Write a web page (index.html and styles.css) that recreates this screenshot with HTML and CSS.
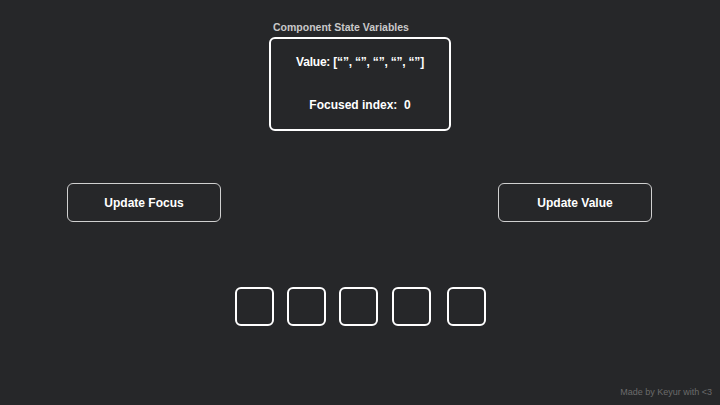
FILE: index.html
```html
<!DOCTYPE html>
<html lang="en">
<head>
  <meta charset="UTF-8">
  <title>OTP Input</title>
  <link rel="stylesheet" href="styles.css">
</head>
<body>

  <div class="state">
    <div class="state-label">Component State Variables</div>
    <div class="state-box">
      <p id="valueText">Value: [“”, “”, “”, “”, “”]</p>
      <p id="focusText">Focused index:&nbsp; 0</p>
    </div>
  </div>

  <div class="actions">
    <button class="action-btn">Update Focus</button>
    <button class="action-btn">Update Value</button>
  </div>

  <div class="otp">
    <input class="otp-box" type="text" maxlength="1">
    <input class="otp-box" type="text" maxlength="1">
    <input class="otp-box" type="text" maxlength="1">
    <input class="otp-box" type="text" maxlength="1">
    <input class="otp-box" type="text" maxlength="1">
  </div>

  <footer>Made by Keyur with &lt;3</footer>

</body>
</html>
```

FILE: styles.css
```css
html, body {
  height: 100%;
}

body {
  margin: 0;
  background: #262729;
  color: #ffffff;
  font-family: 'Liberation Sans', Arial, sans-serif;
  display: flex;
  flex-direction: column;
  align-items: center;
  overflow: hidden;
}

.state {
  margin-top: 21px;
}

.state-label {
  padding-left: 4px;
  font-size: 10.5px;
  line-height: 12px;
  font-weight: bold;
  color: #c9c9c9;
}

.state-box {
  box-sizing: border-box;
  width: 182px;
  height: 94px;
  margin-top: 4px;
  border: 2px solid #ffffff;
  border-radius: 6px;
  text-align: center;
  padding-top: 16px;
}

.state-box p {
  margin: 0;
  font-size: 12px;
  line-height: 14px;
  font-weight: bold;
}

#valueText {
  letter-spacing: -0.2px;
}

#focusText {
  margin-top: 29px;
}

.actions {
  align-self: stretch;
  display: flex;
  justify-content: space-between;
  padding: 0 68px 0 67px;
  margin-top: 52px;
}

.action-btn {
  box-sizing: border-box;
  width: 154px;
  height: 39px;
  background: transparent;
  border: 1px solid #d0d0d0;
  border-radius: 6px;
  color: #ffffff;
  font-family: inherit;
  font-size: 12px;
  font-weight: bold;
  cursor: pointer;
}

.otp {
  display: flex;
  gap: 13px;
  margin-top: 65px;
}

.otp-box {
  box-sizing: border-box;
  width: 39px;
  height: 39px;
  background: transparent;
  border: 2px solid #ffffff;
  border-radius: 6px;
  color: #ffffff;
  text-align: center;
  font-size: 16px;
  outline: none;
}

.otp-box:nth-child(4) {
  margin-left: 1px;
}

.otp-box:last-child {
  margin-left: 3px;
}

footer {
  margin-top: auto;
  align-self: flex-end;
  padding: 0 8px 7px 0;
  font-size: 9px;
  line-height: 12px;
  color: #6b6b6b;
}
```
